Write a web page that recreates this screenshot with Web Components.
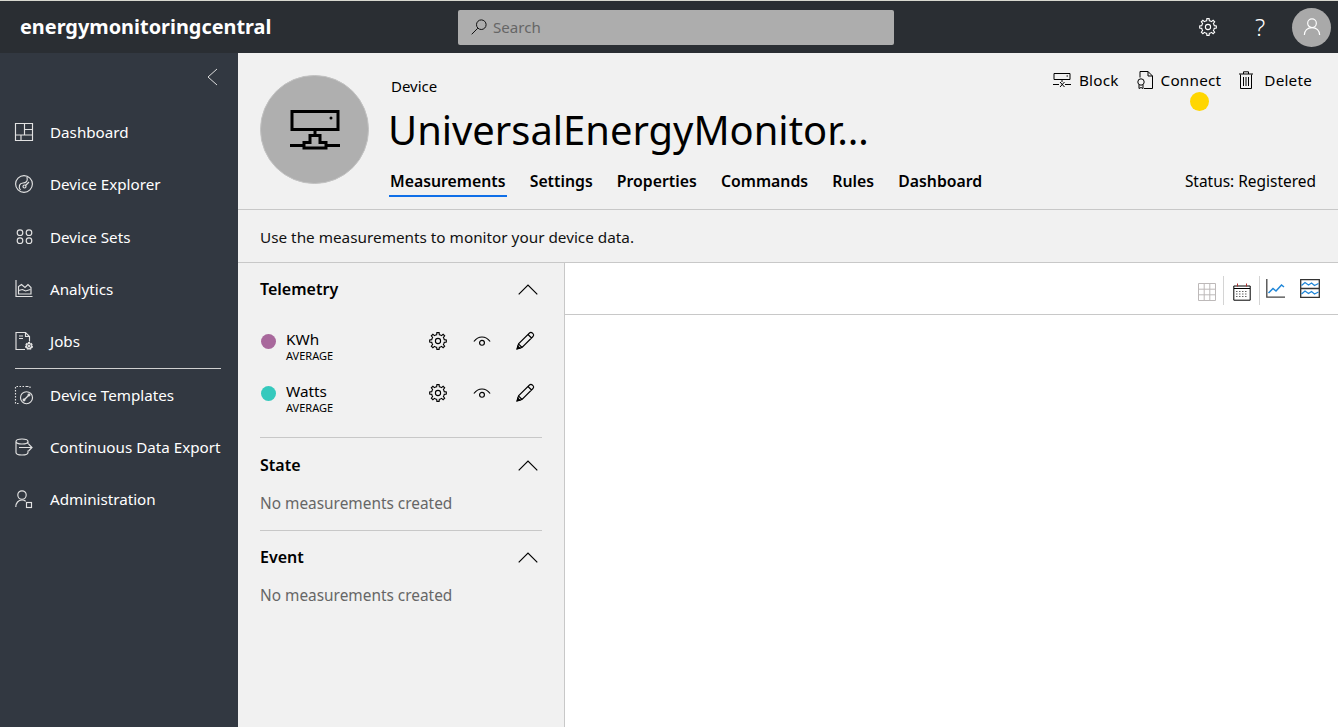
<!DOCTYPE html>
<html lang="en">
<head>
<meta charset="utf-8">
<title>energymonitoringcentral</title>
<style>
    html, body { margin: 0; height: 100%; background: #fff; overflow: hidden; }
    body { font-family: "Noto Sans", "Open Sans", sans-serif; }
</style>
</head>
<body>
<app-shell></app-shell>
<script>
function gearPath(cx, cy, ro, ri, teeth) {
    let d = '';
    const step = Math.PI * 2 / teeth;
    for (let i = 0; i < teeth; i++) {
        const a = i * step - Math.PI / 2;
        const pts = [[ri, a - step * 0.5], [ri, a - step * 0.27], [ro, a - step * 0.17], [ro, a + step * 0.17], [ri, a + step * 0.27]];
        pts.forEach((p, j) => {
            const x = (cx + p[0] * Math.cos(p[1])).toFixed(2);
            const y = (cy + p[0] * Math.sin(p[1])).toFixed(2);
            d += (i === 0 && j === 0 ? 'M' : 'L') + x + ' ' + y;
        });
    }
    return d + 'Z';
}

const ICONS = {
    back: ['12 18', '<path d="M11 1L2 9l9 8"/>'],
    dashboard: ['18 18', '<path d="M.5.5h17v17H.5zM9.5.5v11.500M.5 12h17M9.500 6.500h8M6 12v5.500"/>'],
    explorer: ['18 18', '<circle cx="9" cy="9" r="8.400"/><path d="M5.500 15C3 11.500 4.500 8 8 8c3 0 5-1.500 4-6"/><circle cx="9.500" cy="11.500" r="1.500"/><path d="M10.500 10.500L14 7"/>'],
    sets: ['18 18', '<circle cx="5" cy="4.700" r="2.800"/><circle cx="14" cy="4.700" r="2.800"/><circle cx="5" cy="12.700" r="2.800"/><circle cx="14" cy="12.700" r="2.800"/>'],
    analytics: ['18 18', '<path d="M1 0v16.500h16.500"/><path d="M3.500 14V6.500l3-2 3.500 3 3-3 3 3V14z"/><path d="M3.500 10.500l4-1 3 1.500 5-1.500"/>'],
    jobs: ['18 18', '<path d="M10 17.500H1V.5h9.500l4 4v5"/><path d="M10.500.5v4h4M4 4h4M4 6.500h4"/><path d="' + gearPath(14, 14, 3.4, 2.4, 7) + '"/><circle cx="14" cy="14" r=".8"/>'],
    templates: ['18 18', '<path stroke-dasharray="1.500 1.500" d="M12 .5H.5v17H5M12 .5h3v2"/><circle cx="11.500" cy="11.700" r="6"/><path d="M9 14l5-5"/><circle cx="9" cy="14" r=".9"/><circle cx="14" cy="9" r=".9"/>'],
    exportdata: ['18 18', '<path d="M1 3.500v11c0 1.500 2.500 2.500 6 2.500s6-1 6-2.500v-2M1 3.500C1 2 3.500 1 7 1s6 1 6 2.500S10.500 6 7 6 1 5 1 3.500zM13 3.500V6"/><path d="M4 9.500h13M13.500 6l3.500 3.500-3.500 3.500"/>'],
    admin: ['18 18', '<circle cx="7" cy="5" r="4.200"/><path d="M.8 17c0-4 2.500-7 6.200-7 1.500 0 2.700.4 3.700 1.300"/><rect x="11.500" y="12.500" width="5" height="5"/>'],
    gear: ['18 18', '<path d="' + gearPath(9, 9, 8.4, 6.4, 8) + '"/><circle cx="9" cy="9" r="2.600"/>'],
    user: ['20 20', '<circle cx="10" cy="5.800" r="4.800"/><path d="M1.500 19c0-5 3.500-8.400 8.500-8.400s8.500 3.400 8.500 8.400"/>'],
    search: ['16 16', '<circle cx="10.300" cy="5.700" r="4.800"/><path d="M6.800 9.200L.7 15.300"/>'],
    eye: ['20 12', '<path d="M1 6c2.200-3 5.500-5 9-5s6.800 2 9 5"/><circle cx="10" cy="7.500" r="2.700"/>'],
    pencil: ['18 18', '<path d="M1.200 16.800l1.300-5L13.500 1c.8-.8 2-.8 2.800 0l.7.700c.8.800.8 2 0 2.800L6 15.500zM2.500 11.800l3.500 3.700M12 2.500l3.500 3.500"/><path d="M1 17l.8-3 2.200 2.200z" fill="currentColor"/>'],
    chevup: ['20 11', '<path d="M.7 10.300L10 1l9.300 9.300"/>'],
    block: ['18 16', '<path d="M1 1.500h16v6H1zM13.500 4h1.500M0 12.500h6M12 12.500h6M9 8v2M7 10l4.500 5M11.500 10L7 15"/>'],
    connect: ['16 18', '<path d="M3 6.500v-6h8l4.500 4.500v12.500H7M11 .5v4.500h4.500"/><circle cx="4" cy="11" r="3.200"/><path d="M2 14v3.500l2-1 2 1V14"/>'],
    trash: ['14 18', '<path d="M1.500 3.500V17.500h11V3.500M0 3h14M4.500 3V.8h5V3M4.500 6v9M7 6v9M9.500 6v9"/>'],
    grid: ['18 18', '<path stroke="#bdb9b9" d="M.5.5h17v17H.5zM6.200.5v17M11.800.5v17M.5 6.200h17M.5 11.800h17"/>'],
    calendar: ['18 18', '<path d="M.8 3h16.400v14.200H.8zM1 5.500h16"/><path stroke="#b03030" d="M4.500.5V3.500M13.500.5V3.500"/><path stroke="#666" stroke-dasharray="1.500 1.500" d="M3 8.500h12M3 11h12M3 13.500h12"/>'],
    line: ['19 19', '<path stroke="#444" stroke-width="1.300" d="M.8 0v18.200H19"/><path stroke="#1f86d8" stroke-width="1.500" d="M2.500 14l4.500-4.500 3 2.500 5.500-6 2.500 2"/>'],
    area: ['20 19', '<path stroke="#333" stroke-width="1.300" d="M.7.7h18.600v17.600H.7zM.7 9.500h18.600"/><path stroke="#1f86d8" stroke-width="1.300" d="M1.500 6.500l3.500-3 3.500 2.500 3-2 3 2.500 4-2M1.500 15l3.500-3 3.500 2.500 3-2 3 2.500 4-2"/>']
};

class UiIcon extends HTMLElement {
    connectedCallback() {
        const [vb, body] = ICONS[this.getAttribute('name')];
        const [w, h] = vb.split(' ');
        const root = this.attachShadow({ mode: 'open' });
        root.innerHTML = `
            <style>
                :host { display: inline-flex; flex: none; line-height: 0; }
                svg { display: block; overflow: visible; fill: none; stroke: currentColor; stroke-width: var(--sw, 1); }
            </style>
            <svg width="${this.getAttribute('w') || w}" height="${this.getAttribute('h') || h}" viewBox="0 0 ${w} ${h}">${body}</svg>
        `;
    }
}
customElements.define('ui-icon', UiIcon);

class TopBar extends HTMLElement {
    constructor() {
        super();
        this.attachShadow({ mode: 'open' }).innerHTML = `
            <style>
                :host { display: flex; flex: none; height: 52px; border-top: 1px solid #d8d8d0; background: #2a2e33; color: #fff; align-items: center; padding: 0 7px 0 20px; box-sizing: content-box; }
                .brand { width: 438px; font-size: 19.900px; font-weight: 700; line-height: 52px; white-space: nowrap; }
                .search { width: 436px; height: 35px; box-sizing: border-box; padding: 0 0 0 13px; background: #adadad; border-radius: 2px; display: flex; align-items: center; gap: 6px; color: #666; font-size: 15.100px; }
                .search ui-icon { color: #111; }
                .right { margin-left: auto; display: flex; align-items: center; }
                .gear { margin-right: 33px; --sw: 1.100; }
                .help { width: 20px; font-size: 24px; font-weight: 300; text-align: center; margin-right: 22px; line-height: 30px; }
                .avatar { width: 39px; height: 39px; border-radius: 50%; background: #a9a9a9; display: flex; align-items: center; justify-content: center; --sw: 1.300; }
            </style>
            <div class="brand">energymonitoringcentral</div>
            <div class="search"><ui-icon name="search"></ui-icon><span>Search</span></div>
            <div class="right">
                <ui-icon class="gear" name="gear"></ui-icon>
                <div class="help">?</div>
                <div class="avatar"><ui-icon name="user" w="18" h="18"></ui-icon></div>
            </div>
        `;
    }
}
customElements.define('top-bar', TopBar);

class NavItem extends HTMLElement {
    connectedCallback() {
        this.attachShadow({ mode: 'open' }).innerHTML = `
            <style>
                :host { display: flex; align-items: center; height: 52.250px; padding-left: 15px; gap: 17px; color: #fff; font-size: 15.200px; white-space: nowrap; }
                ui-icon { color: #e2e2e2; --sw: 1.150; }
            </style>
            <ui-icon name="${this.getAttribute('icon')}"></ui-icon>
            <slot></slot>
        `;
    }
}
customElements.define('nav-item', NavItem);

class SideNav extends HTMLElement {
    constructor() {
        super();
        this.attachShadow({ mode: 'open' }).innerHTML = `
            <style>
                :host { display: block; flex: none; width: 238px; background: #323841; }
                .back { height: 53px; display: flex; justify-content: flex-end; align-items: flex-start; padding: 15px 20px 0 0; box-sizing: border-box; color: #ddd; }
                hr { margin: 1px 17px 0 15px; border: 0; height: 1px; background: #d0d0d0; }
                .low { height: 52px; }
            </style>
            <div class="back"><ui-icon name="back"></ui-icon></div>
            <nav-item icon="dashboard">Dashboard</nav-item>
            <nav-item icon="explorer">Device Explorer</nav-item>
            <nav-item icon="sets">Device Sets</nav-item>
            <nav-item icon="analytics">Analytics</nav-item>
            <nav-item icon="jobs">Jobs</nav-item>
            <hr>
            <nav-item class="low" icon="templates">Device Templates</nav-item>
            <nav-item class="low" icon="exportdata">Continuous Data Export</nav-item>
            <nav-item class="low" icon="admin">Administration</nav-item>
        `;
    }
}
customElements.define('side-nav', SideNav);

class DeviceHeader extends HTMLElement {
    constructor() {
        super();
        this.attachShadow({ mode: 'open' }).innerHTML = `
            <style>
                :host { display: flex; flex: none; height: 157px; box-sizing: border-box; background: #f1f1f1; border-bottom: 1px solid #c8c8c8; padding: 22px 22px 0 22px; position: relative; color: #000; }
                .avatar { width: 109px; height: 109px; flex: none; box-sizing: border-box; border-radius: 50%; background: #afafaf; border: 1px solid #c2c2c2; display: flex; align-items: center; justify-content: center; }
                .avatar svg { display: block; fill: none; stroke: #000; stroke-width: 3; }
                .main { flex: 1; margin-left: 19px; min-width: 0; }
                .kind { font-size: 15px; line-height: 20px; margin: 1px 0 0 3px; }
                h1 { margin: 6px 0 0; font-size: 39.900px; font-weight: 400; line-height: 56px; white-space: nowrap; height: 56px; }
                .tabs { display: flex; gap: 24.200px; margin: 12px 0 0 2px; font-size: 15.800px; font-weight: 600; }
                .tabs span { line-height: 22px; height: 27px; box-sizing: border-box; }
                .tabs .on { border-bottom: 2px solid #0f6fe8; margin: 0 -1px; padding: 0 1px; }
                .side { display: flex; flex-direction: column; justify-content: space-between; align-items: flex-end; height: 116px; }
                .actions { display: flex; gap: 18px; font-size: 15.300px; letter-spacing: .2px; margin: -1px 4px 0 0; }
                .action { display: flex; align-items: center; gap: 8px; height: 12px; line-height: 12px; }
                .action.c { gap: 8px; }
                .action.d { gap: 11px; }
                .status { font-size: 15.450px; line-height: 20px; }
            </style>
            <div class="avatar">
                <svg width="50" height="40" viewBox="0 0 50 40"><path d="M2 1.500h46v18H2zM25 20v5M0 35.500h14M36 35.500h14M14 38V32.500h6V25.500h10V32.500h6V38z"/><circle cx="41" cy="8" r="1.500" fill="#000" stroke="none"/></svg>
            </div>
            <div class="main">
                <div class="kind">Device</div>
                <h1>UniversalEnergyMonitor…</h1>
                <div class="tabs">
                    <span class="on">Measurements</span><span>Settings</span><span>Properties</span><span>Commands</span><span>Rules</span><span>Dashboard</span>
                </div>
            </div>
            <div class="side">
                <div class="actions">
                    <div class="action b"><ui-icon name="block"></ui-icon>Block</div>
                    <div class="action c"><ui-icon name="connect"></ui-icon>Connect</div>
                    <div class="action d"><ui-icon name="trash"></ui-icon>Delete</div>
                </div>
                <div class="status">Status: Registered</div>
            </div>
        `;
    }
}
customElements.define('device-header', DeviceHeader);

class MeasureRow extends HTMLElement {
    connectedCallback() {
        this.attachShadow({ mode: 'open' }).innerHTML = `
            <style>
                :host { display: flex; align-items: center; height: 52px; color: #000; }
                .dot { width: 15px; height: 15px; border-radius: 50%; background: ${this.getAttribute('color')}; margin: 0 10px 0 1px; flex: none; }
                .txt { flex: 1; padding-top: 9px; }
                .name { font-size: 15.300px; line-height: 20px; }
                .agg { font-size: 11px; line-height: 12px; margin-top: 1px; }
                .tools { display: flex; align-items: center; --sw: 1.100; }
                .tools ui-icon:nth-child(1) { margin-right: 26px; }
                .tools ui-icon:nth-child(2) { margin-right: 25px; --sw: 1.300; }
                .tools ui-icon:nth-child(3) { margin-right: 8px; }
            </style>
            <div class="dot"></div>
            <div class="txt"><div class="name">${this.getAttribute('name')}</div><div class="agg">AVERAGE</div></div>
            <div class="tools"><ui-icon name="gear"></ui-icon><ui-icon name="eye" w="18" h="11"></ui-icon><ui-icon name="pencil"></ui-icon></div>
        `;
    }
}
customElements.define('measure-row', MeasureRow);

class MeasureGroup extends HTMLElement {
    connectedCallback() {
        this.attachShadow({ mode: 'open' }).innerHTML = `
            <style>
                :host { display: block; border-bottom: 1px solid #c8c8c8; }
                :host(:last-of-type) { border-bottom: 0; }
                .head { display: flex; justify-content: space-between; align-items: center; height: 24px; font-size: 16px; font-weight: 600; color: #000; padding-right: 4px; --sw: 1.200; }
            </style>
            <div class="head"><span>${this.getAttribute('label')}</span><ui-icon name="chevup"></ui-icon></div>
            <slot></slot>
        `;
    }
}
customElements.define('measure-group', MeasureGroup);

class EmptyNote extends HTMLElement {
    constructor() {
        super();
        this.attachShadow({ mode: 'open' }).innerHTML = `
            <style>
                :host { display: block; font-size: 15.400px; line-height: 20px; color: #666; margin-top: 17px; padding-bottom: 16px; }
            </style>
            No measurements created
        `;
    }
}
customElements.define('empty-note', EmptyNote);

class ChartPane extends HTMLElement {
    constructor() {
        super();
        this.attachShadow({ mode: 'open' }).innerHTML = `
            <style>
                :host { display: block; flex: 1; background: #fff; min-width: 0; }
                .bar { height: 52px; box-sizing: border-box; border-bottom: 1px solid #c8c8c8; display: flex; align-items: center; justify-content: flex-end; padding: 0 18px 0 0; }
                i { display: block; width: 1px; height: 29px; margin-top: 3px; background: #d4d4d4; }
                .g { margin: 6px 7px 0 0; }
                .c { margin: 6px 8px 0 9px; }
                .l { margin: 0 15px 0 6px; }
                .a { margin-top: 0; }
            </style>
            <div class="bar">
                <ui-icon class="g" name="grid"></ui-icon><i></i>
                <ui-icon class="c" name="calendar"></ui-icon><i></i>
                <ui-icon class="l" name="line"></ui-icon>
                <ui-icon class="a" name="area"></ui-icon>
            </div>
        `;
    }
}
customElements.define('chart-pane', ChartPane);

class AppShell extends HTMLElement {
    constructor() {
        super();
        this.attachShadow({ mode: 'open' }).innerHTML = `
            <style>
                :host { display: flex; flex-direction: column; width: 1338px; height: 727px; position: relative; overflow: hidden; }
                .body { flex: 1; display: flex; min-height: 0; }
                .content { flex: 1; display: flex; flex-direction: column; min-width: 0; background: #f1f1f1; }
                .hint { flex: none; height: 53px; box-sizing: border-box; border-bottom: 1px solid #c8c8c8; padding: 2px 22px 0; display: flex; align-items: center; font-size: 15.300px; color: #111; }
                .split { flex: 1; display: flex; min-height: 0; }
                .left { width: 327px; flex: none; box-sizing: border-box; border-right: 1px solid #c8c8c8; padding: 14px 22px 0; }
                .rows { padding: 14px 0 18px; }
                .state { padding-top: 15px; }
                .event { padding-top: 14px; }
                .pulse { position: absolute; left: 1190px; top: 92px; width: 19px; height: 19px; border-radius: 50%; background: #ffd600; }
            </style>
            <top-bar></top-bar>
            <div class="body">
                <side-nav></side-nav>
                <div class="content">
                    <device-header></device-header>
                    <div class="hint">Use the measurements to monitor your device data.</div>
                    <div class="split">
                        <div class="left">
                            <measure-group label="Telemetry">
                                <div class="rows">
                                    <measure-row name="KWh" color="#a8689c"></measure-row>
                                    <measure-row name="Watts" color="#35c9bd"></measure-row>
                                </div>
                            </measure-group>
                            <measure-group class="state" label="State"><empty-note></empty-note></measure-group>
                            <measure-group class="event" label="Event"><empty-note></empty-note></measure-group>
                        </div>
                        <chart-pane></chart-pane>
                    </div>
                </div>
            </div>
            <div class="pulse"></div>
        `;
    }
}
customElements.define('app-shell', AppShell);
</script>
</body>
</html>
